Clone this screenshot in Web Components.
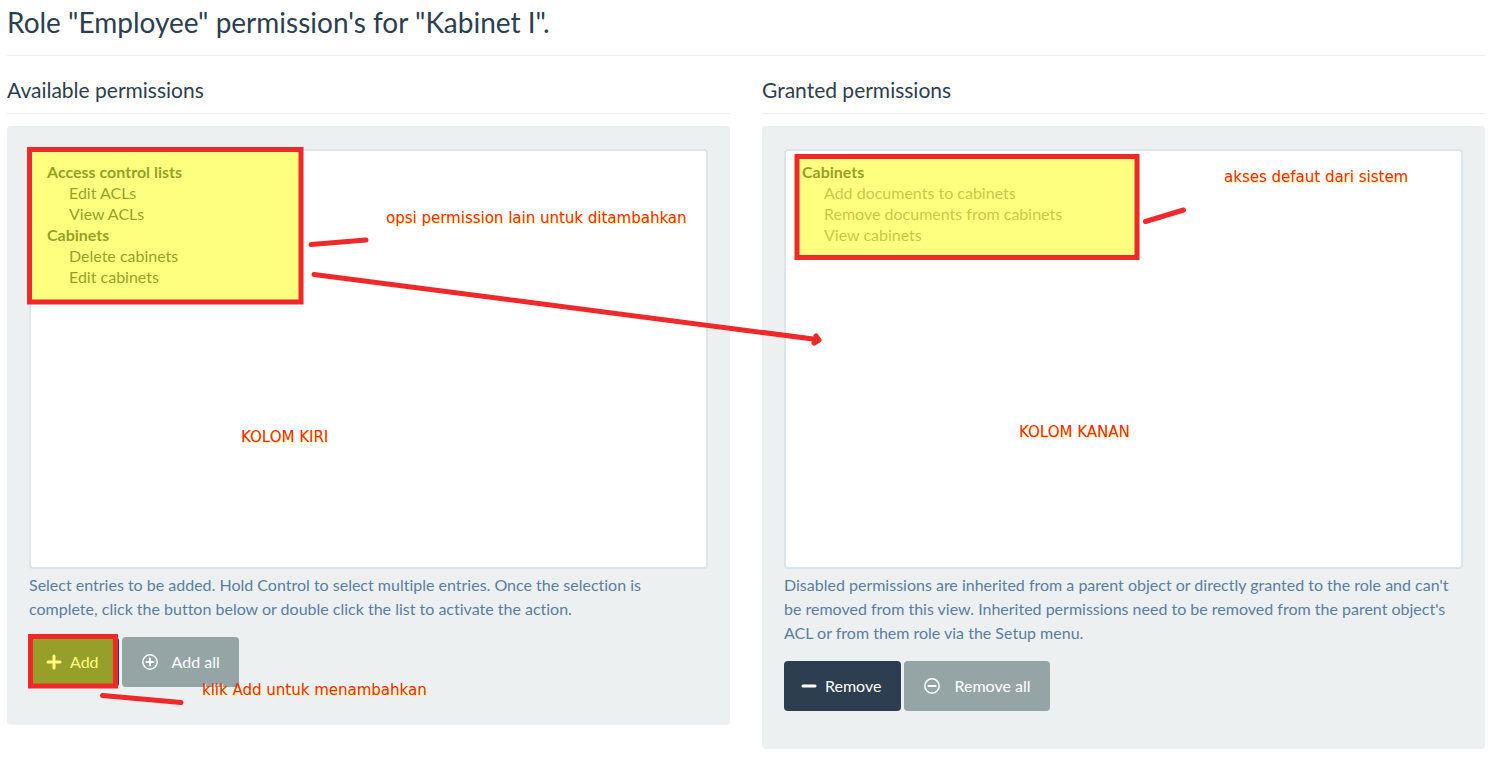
<!DOCTYPE html>
<html lang="en">
<head>
<meta charset="utf-8">
<meta name="viewport" content="width=device-width, initial-scale=1">
<title>Role permissions</title>
<style>
  body { margin: 0; background: #fff; color: #2c3e50; font-family: Lato, sans-serif; font-size: 16px; line-height: 24px; font-variant-ligatures: none; }
  select { font: inherit; font-variant-ligatures: none; line-height: 21px; }
  optgroup { font-weight: 700; line-height: 21px; padding: 0; color: #2c3e50; }
  option { font-weight: 400; line-height: 21px; min-height: 21px; padding: 0 0 0 24px; color: #2c3e50; box-sizing: border-box; }
  option:first-child { min-height: 22px; padding-top: 1px; }
  option:disabled { color: #909090; }
</style>
</head>
<body>
<role-page>
  <span slot="title">Role "Employee" permission's for "Kabinet I".</span>
  <permission-panel>
    <label slot="title" for="available">Available permissions</label>
    <select id="available" multiple>
      <optgroup label="Access control lists"><option>Edit ACLs</option><option>View ACLs</option></optgroup>
      <optgroup label="Cabinets"><option>Delete cabinets</option><option>Edit cabinets</option></optgroup>
    </select>
    <span slot="help">Select entries to be added. Hold Control to select multiple entries. Once the selection is complete, click the button below or double click the list to activate the action.</span>
    <action-button slot="actions" icon="plus">Add</action-button>
    <action-button slot="actions" icon="circle-plus" muted>Add all</action-button>
  </permission-panel>
  <permission-panel>
    <label slot="title" for="granted">Granted permissions</label>
    <select id="granted" multiple>
      <optgroup label="Cabinets"><option disabled>Add documents to cabinets</option><option disabled>Remove documents from cabinets</option><option disabled>View cabinets</option></optgroup>
    </select>
    <span slot="help">Disabled permissions are inherited from a parent object or directly granted to the role and can't be removed from this view. Inherited permissions need to be removed from the parent object's ACL or from them role via the Setup menu.</span>
    <action-button slot="actions" icon="minus">Remove</action-button>
    <action-button slot="actions" icon="circle-minus" muted>Remove all</action-button>
  </permission-panel>
  <annotation-layer slot="notes">
    <note-label x="386" y="209">opsi permission lain untuk ditambahkan</note-label>
    <note-label x="1224" y="168">akses defaut dari sistem</note-label>
    <note-label x="241" y="428">KOLOM KIRI</note-label>
    <note-label x="1019" y="423">KOLOM KANAN</note-label>
    <note-label x="202" y="681">klik Add untuk menambahkan</note-label>
  </annotation-layer>
</role-page>

<template id="role-page">
  <style>
    :host { display: block; position: relative; padding: 0 12px 9px 7px; }
    h1 { margin: 0 0 20px; padding: 3px 0 14px; border-bottom: 1px solid #ecf0f1; font-size: 28px; font-weight: 400; line-height: 38px; }
    main { display: grid; grid-template-columns: 1fr 1fr; gap: 32px; align-items: start; }
  </style>
  <h1><slot name="title"></slot></h1>
  <main><slot></slot></main>
  <slot name="notes"></slot>
</template>

<template id="permission-panel">
  <style>
    :host { display: block; min-width: 0; }
    h2 { margin: 0 0 12px; padding: 2px 0 11px; border-bottom: 1px solid #ecf0f1; font-size: 21px; font-weight: 400; line-height: 24px; }
    .well { padding: 23px 22px 38px; border-radius: 4px; background: #ecf0f1; }
    ::slotted(select) { display: block; box-sizing: border-box; width: 100%; height: 420px; margin: 0; padding: 11px 14px; border: 2px solid #dce4ec; border-radius: 4px; background: #fff; outline: 0; }
    p { margin: 4px 0 16px; color: #597ea2; }
    .actions { display: flex; gap: 3px; }
  </style>
  <h2><slot name="title"></slot></h2>
  <div class="well">
    <slot></slot>
    <p><slot name="help"></slot></p>
    <div class="actions"><slot name="actions"></slot></div>
  </div>
</template>

<template id="action-button">
  <style>
    :host { display: block; }
    button { display: flex; align-items: center; gap: 8px; height: 50px; margin: 0; padding: 0 20px 1px 17px; border: 0; border-radius: 4px; background: #2c3e50; color: #fff; font: inherit; font-variant-ligatures: none; }
    :host([muted]) button { gap: 14px; padding: 0 19px 1px 20px; background: #95a5a6; }
    svg { display: block; width: 16px; height: 16px; fill: none; stroke: currentColor; }
  </style>
  <button type="button"><svg viewBox="0 0 16 16" aria-hidden="true"></svg><span><slot></slot></span></button>
</template>

<template id="annotation-layer">
  <style>
    :host { display: block; position: absolute; top: 0; left: 0; pointer-events: none; }
    svg { display: block; position: absolute; top: 0; left: 0; overflow: visible; }
    rect { fill: #ffff00; fill-opacity: .5; stroke: #ef2929; stroke-width: 5; }
    path { fill: none; stroke: #ef2929; stroke-width: 5; stroke-linecap: round; stroke-linejoin: round; }
  </style>
  <svg width="1" height="1" aria-hidden="true">
    <rect x="29.5" y="149.5" width="271.5" height="152.5"/>
    <rect x="797" y="156.5" width="340" height="101"/>
    <rect x="30.5" y="636.5" width="85" height="49.5"/>
    <path d="M311 244.5 366 240M314 274.5 817 339.5M816 336 819 340 814 343M1145.5 221.5 1183.5 210M102.5 695.5 181 702.5"/>
  </svg>
  <slot></slot>
</template>

<template id="note-label">
  <style>
    :host { display: block; position: absolute; color: #ef2929; font: 15px/18px "DejaVu Sans", sans-serif; white-space: nowrap; text-shadow: 1px 1px 0 #ffff66; }
  </style>
  <slot></slot>
</template>

<script>
  class TemplateElement extends HTMLElement {
    constructor() {
      super();
      const template = document.getElementById(this.localName);
      this.attachShadow({ mode: 'open' }).append(template.content.cloneNode(true));
    }
  }
  const icons = {
    'plus': '<path stroke-width="3" stroke-linecap="round" d="M2 8H14M8 2V14"/>',
    'minus': '<path stroke-width="3" stroke-linecap="round" d="M2 8H14"/>',
    'circle-plus': '<circle cx="8" cy="8" r="7.2" stroke-width="1.5"/><path stroke-width="2" d="M3.7 8H12.3M8 3.7V12.3"/>',
    'circle-minus': '<circle cx="8" cy="8" r="7.2" stroke-width="1.5"/><path stroke-width="2" d="M3.7 8H12.3"/>'
  };
  customElements.define('role-page', class extends TemplateElement {});
  customElements.define('permission-panel', class extends TemplateElement {});
  customElements.define('annotation-layer', class extends TemplateElement {});
  customElements.define('action-button', class extends TemplateElement {
    connectedCallback() {
      this.shadowRoot.querySelector('svg').innerHTML = icons[this.getAttribute('icon')];
    }
  });
  customElements.define('note-label', class extends TemplateElement {
    connectedCallback() {
      this.style.left = this.getAttribute('x') + 'px';
      this.style.top = this.getAttribute('y') + 'px';
    }
  });
</script>
</body>
</html>
